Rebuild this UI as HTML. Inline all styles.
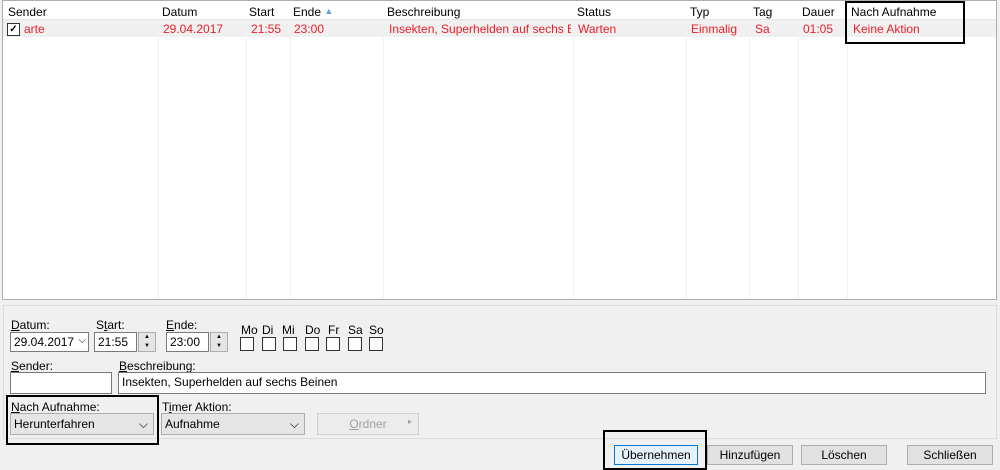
<!DOCTYPE html>
<html><head><style>
body{margin:0;width:1000px;height:469px;background:#f0f0f0;font-family:"Liberation Sans",sans-serif;font-size:12px;color:#000;position:relative;overflow:hidden}
.a{position:absolute;white-space:nowrap}
.list{position:absolute;left:2px;top:0;width:993px;height:298px;background:#fff;border:1px solid #adadad}
.sep{position:absolute;top:0;width:1px;height:298px;background:#f2f2f2}
.r{color:#e8202a}
.in{position:absolute;background:#fff;border:1px solid #7a7a7a;height:20px;box-sizing:border-box;padding:2px 3px;font-size:12px}
.cb{position:absolute;width:12px;height:12px;border:1px solid #333;background:#fff;top:337px}
.btn{position:absolute;top:445px;height:20px;border:1px solid #adadad;background:#e1e1e1;box-sizing:border-box;text-align:center;line-height:18px}
.dd{position:absolute;background:#e5e5e5;border:1px solid #adadad;box-sizing:border-box;height:22px;padding:3px 3px}
.box{position:absolute;border:2px solid #000;box-sizing:border-box}
u{text-decoration:underline}
</style></head><body>
<div class="list">
<div style="position:absolute;left:0;top:18px;width:993px;height:18px;background:#f0f0f0"></div>
<div class="sep" style="left:155px"></div><div class="sep" style="left:243px"></div><div class="sep" style="left:287px"></div><div class="sep" style="left:380px"></div><div class="sep" style="left:570px"></div><div class="sep" style="left:683px"></div><div class="sep" style="left:746px"></div><div class="sep" style="left:795px"></div><div class="sep" style="left:844px"></div>
</div>
<div style="position:absolute;left:3px;top:1px;width:993px;height:18px;background:#fff;border-bottom:1px solid #e5e5e5"></div>
<div class="a" style="left:8px;top:5px">Sender</div>
<div class="a" style="left:162px;top:5px">Datum</div>
<div class="a" style="left:249px;top:5px">Start</div>
<div class="a" style="left:293px;top:5px">Ende <span style="color:#6aa0d0;font-size:9px;vertical-align:2px">▲</span></div>
<div class="a" style="left:387px;top:5px">Beschreibung</div>
<div class="a" style="left:577px;top:5px">Status</div>
<div class="a" style="left:690px;top:5px">Typ</div>
<div class="a" style="left:753px;top:5px">Tag</div>
<div class="a" style="left:802px;top:5px">Dauer</div>
<div class="a" style="left:851px;top:5px">Nach Aufnahme</div>
<div style="position:absolute;left:7px;top:23px;width:11px;height:11px;border:1px solid #333;background:#fff;font-size:10px;line-height:11px;text-align:center;font-weight:bold">✓</div>
<div class="a r" style="left:24px;top:22px">arte</div>
<div class="a r" style="left:163px;top:22px">29.04.2017</div>
<div class="a r" style="left:251px;top:22px">21:55</div>
<div class="a r" style="left:294px;top:22px">23:00</div>
<div class="a r" style="left:389px;top:22px;width:182px;overflow:hidden">Insekten, Superhelden auf sechs B...</div>
<div class="a r" style="left:578px;top:22px">Warten</div>
<div class="a r" style="left:691px;top:22px">Einmalig</div>
<div class="a r" style="left:755px;top:22px">Sa</div>
<div class="a r" style="left:803px;top:22px">01:05</div>
<div class="a r" style="left:853px;top:22px">Keine Aktion</div>
<div class="box" style="left:845px;top:1px;width:120px;height:43px"></div>

<div style="position:absolute;left:3px;top:305px;width:994px;height:134px;border:1px solid #dcdcdc;box-sizing:border-box"></div>
<div class="a" style="left:11px;top:318px"><u>D</u>atum:</div>
<div class="in" style="left:10px;top:332px;width:79px">29.04.2017<span style="position:absolute;right:2px;top:2px;font-size:10px">⌵</span></div>
<div class="a" style="left:96px;top:318px">S<u>t</u>art:</div>
<div class="in" style="left:94px;top:332px;width:43px">21:55</div>
<div style="position:absolute;left:138px;top:332px;width:18px;height:20px;background:#e5e5e5;border:1px solid #adadad;box-sizing:border-box;font-size:6px;text-align:center;line-height:9px">▲<br>▼</div>
<div class="a" style="left:166px;top:318px"><u>E</u>nde:</div>
<div class="in" style="left:166px;top:332px;width:43px">23:00</div>
<div style="position:absolute;left:210px;top:332px;width:18px;height:20px;background:#e5e5e5;border:1px solid #adadad;box-sizing:border-box;font-size:6px;text-align:center;line-height:9px">▲<br>▼</div>
<div class="a" style="left:241px;top:323px">Mo</div><div class="a" style="left:262px;top:323px">Di</div><div class="a" style="left:282px;top:323px">Mi</div><div class="a" style="left:305px;top:323px">Do</div><div class="a" style="left:328px;top:323px">Fr</div><div class="a" style="left:348px;top:323px">Sa</div><div class="a" style="left:369px;top:323px">So</div>
<div class="cb" style="left:240px"></div><div class="cb" style="left:262px"></div><div class="cb" style="left:283px"></div><div class="cb" style="left:305px"></div><div class="cb" style="left:326px"></div><div class="cb" style="left:348px"></div><div class="cb" style="left:369px"></div>
<div class="a" style="left:11px;top:359px"><u>S</u>ender:</div>
<div class="in" style="left:10px;top:372px;width:102px;height:22px"></div>
<div class="a" style="left:119px;top:359px"><u>B</u>eschreibung:</div>
<div class="in" style="left:118px;top:372px;width:868px;height:22px">Insekten, Superhelden auf sechs Beinen</div>
<div class="a" style="left:11px;top:400px"><u>N</u>ach Aufnahme:</div>
<div class="dd" style="left:10px;top:413px;width:144px">Herunterfahren<span style="position:absolute;right:5px;top:3px">⌵</span></div>
<div class="box" style="left:6px;top:395px;width:153px;height:50px"></div>
<div class="a" style="left:162px;top:400px">T<u>i</u>mer Aktion:</div>
<div class="dd" style="left:161px;top:413px;width:144px;background:#e5e5e5">Aufnahme<span style="position:absolute;right:5px;top:3px">⌵</span></div>
<div class="dd" style="left:317px;top:413px;width:102px;background:#ececec;border-color:#d0d0d0;color:#a0a0a0;text-align:center"><u>O</u>rdner<span style="position:absolute;right:6px;top:3px;font-size:8px">▸</span></div>
<div class="btn" style="left:614px;width:84px;border-color:#0078d7;background:#e5f1fb">Übernehmen</div>
<div class="btn" style="left:707px;width:86px">Hinzufügen</div>
<div class="btn" style="left:801px;width:86px">Löschen</div>
<div class="btn" style="left:907px;width:86px">Schließen</div>
<div class="box" style="left:603px;top:430px;width:104px;height:40px"></div>
</body></html>
